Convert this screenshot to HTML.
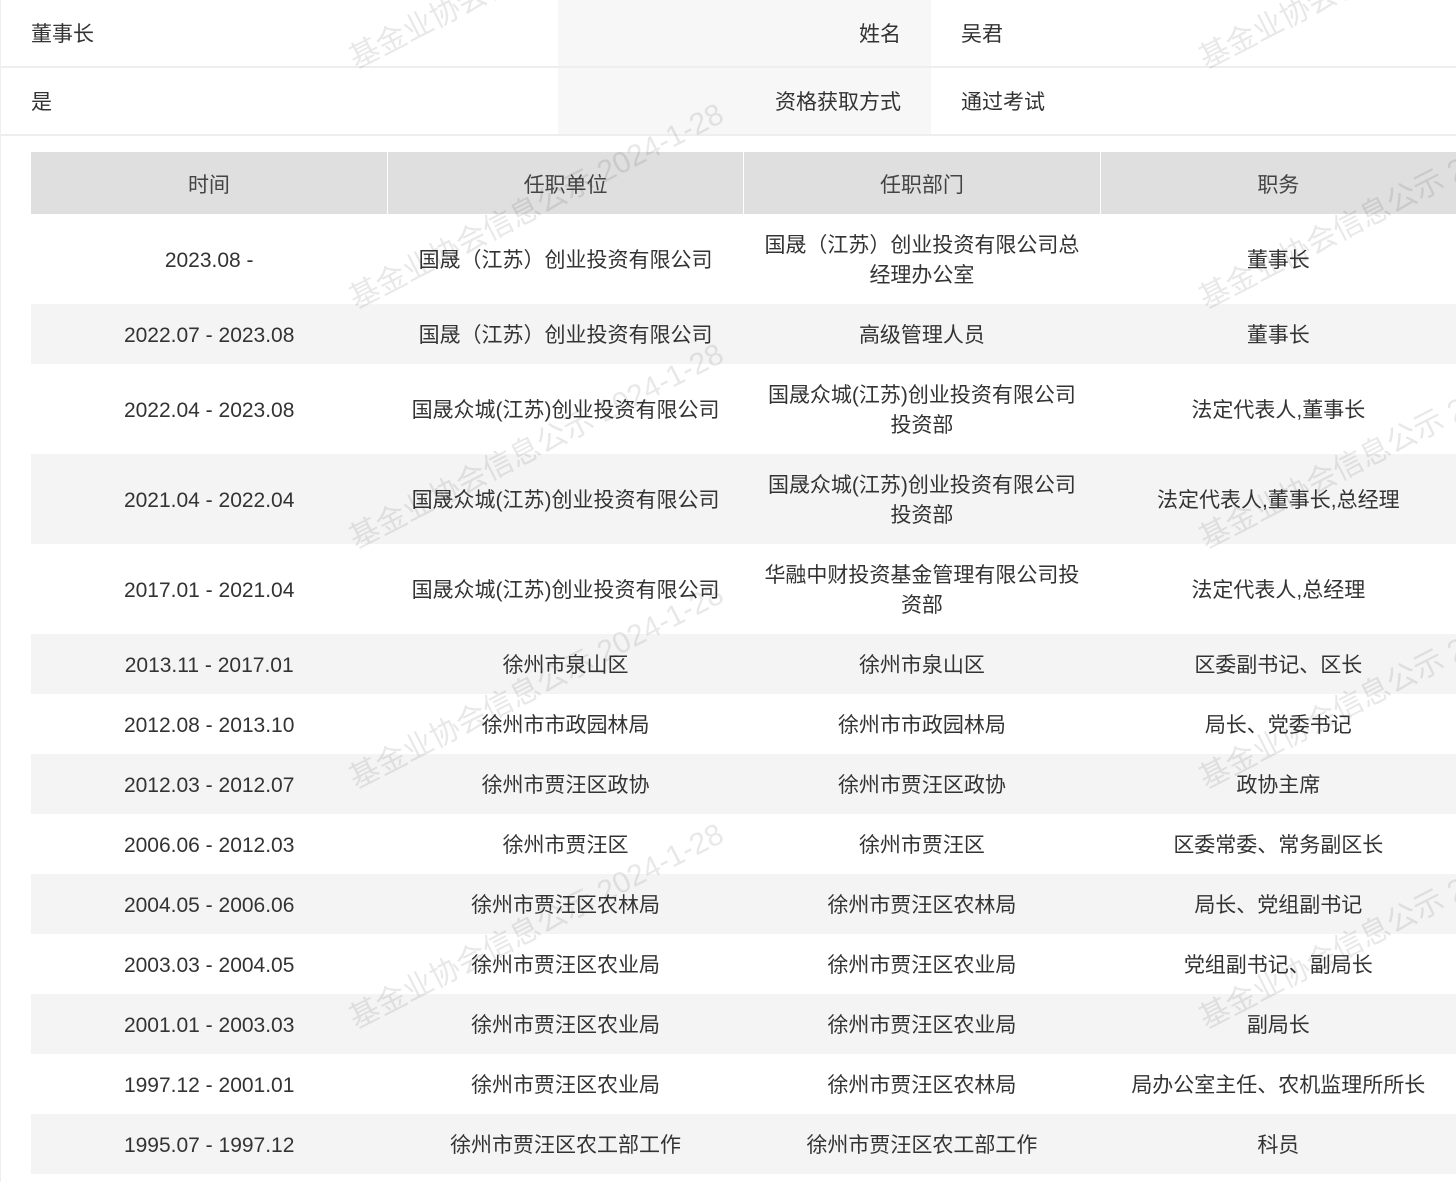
<!DOCTYPE html>
<html><head><meta charset="utf-8"><style>
*{margin:0;padding:0;box-sizing:border-box}
html,body{width:1456px;height:1182px;overflow:hidden;background:#fff;font-family:"Liberation Sans","Noto Sans CJK SC",sans-serif;color:#333;font-size:21px;position:relative}
.top{position:absolute;left:0;top:0;width:1456px;border-left:1px solid #eee}
.tr{display:flex;height:68px;border-bottom:2px solid #eee}
.c{display:flex;align-items:center}
.c1{width:557px;padding-left:30px}
.c2{width:373px;background:#f7f7f7;justify-content:flex-end;padding-right:30px}
.c3{flex:1;padding-left:30px}
.side{position:absolute;left:0;top:136px;width:1px;height:1046px;background:#eee}
table{position:absolute;left:31px;top:152px;border-collapse:collapse;width:1426px;table-layout:fixed}
th{background:#dfdfdf;font-weight:normal;height:62px;border-right:1px solid #fff;color:#444;padding-top:2px}
td{text-align:center;height:60px;line-height:30px;padding:3px 18px 0}
tr.t td{height:90px}
tr.g td{background:#f4f4f4}
.wm{position:absolute;font-size:30px;color:rgba(0,0,0,0.09);white-space:nowrap;transform:rotate(-27deg);transform-origin:0 0;pointer-events:none}
</style></head><body>
<div class="top">
<div class="tr"><div class="c c1">董事长</div><div class="c c2">姓名</div><div class="c c3">吴君</div></div>
<div class="tr"><div class="c c1">是</div><div class="c c2">资格获取方式</div><div class="c c3">通过考试</div></div>
</div>
<div class="side"></div>
<table>
<tr><th>时间</th><th>任职单位</th><th>任职部门</th><th>职务</th></tr>
<tr class="t"><td>2023.08 -</td><td>国晟（江苏）创业投资有限公司</td><td>国晟（江苏）创业投资有限公司总经理办公室</td><td>董事长</td></tr>
<tr class="g"><td>2022.07 - 2023.08</td><td>国晟（江苏）创业投资有限公司</td><td>高级管理人员</td><td>董事长</td></tr>
<tr class="t"><td>2022.04 - 2023.08</td><td>国晟众城(江苏)创业投资有限公司</td><td>国晟众城(江苏)创业投资有限公司投资部</td><td>法定代表人,董事长</td></tr>
<tr class="t g"><td>2021.04 - 2022.04</td><td>国晟众城(江苏)创业投资有限公司</td><td>国晟众城(江苏)创业投资有限公司投资部</td><td>法定代表人,董事长,总经理</td></tr>
<tr class="t"><td>2017.01 - 2021.04</td><td>国晟众城(江苏)创业投资有限公司</td><td>华融中财投资基金管理有限公司投资部</td><td>法定代表人,总经理</td></tr>
<tr class="g"><td>2013.11 - 2017.01</td><td>徐州市泉山区</td><td>徐州市泉山区</td><td>区委副书记、区长</td></tr>
<tr><td>2012.08 - 2013.10</td><td>徐州市市政园林局</td><td>徐州市市政园林局</td><td>局长、党委书记</td></tr>
<tr class="g"><td>2012.03 - 2012.07</td><td>徐州市贾汪区政协</td><td>徐州市贾汪区政协</td><td>政协主席</td></tr>
<tr><td>2006.06 - 2012.03</td><td>徐州市贾汪区</td><td>徐州市贾汪区</td><td>区委常委、常务副区长</td></tr>
<tr class="g"><td>2004.05 - 2006.06</td><td>徐州市贾汪区农林局</td><td>徐州市贾汪区农林局</td><td>局长、党组副书记</td></tr>
<tr><td>2003.03 - 2004.05</td><td>徐州市贾汪区农业局</td><td>徐州市贾汪区农业局</td><td>党组副书记、副局长</td></tr>
<tr class="g"><td>2001.01 - 2003.03</td><td>徐州市贾汪区农业局</td><td>徐州市贾汪区农业局</td><td>副局长</td></tr>
<tr><td>1997.12 - 2001.01</td><td>徐州市贾汪区农业局</td><td>徐州市贾汪区农林局</td><td>局办公室主任、农机监理所所长</td></tr>
<tr class="g"><td>1995.07 - 1997.12</td><td>徐州市贾汪区农工部工作</td><td>徐州市贾汪区农工部工作</td><td>科员</td></tr>
</table>
<div class="wm" style="left:340px;top:38px">基金业协会信息公示 2024-1-28</div>
<div class="wm" style="left:1190px;top:38px">基金业协会信息公示 2024-1-28</div>
<div class="wm" style="left:340px;top:278px">基金业协会信息公示 2024-1-28</div>
<div class="wm" style="left:1190px;top:278px">基金业协会信息公示 2024-1-28</div>
<div class="wm" style="left:340px;top:518px">基金业协会信息公示 2024-1-28</div>
<div class="wm" style="left:1190px;top:518px">基金业协会信息公示 2024-1-28</div>
<div class="wm" style="left:340px;top:758px">基金业协会信息公示 2024-1-28</div>
<div class="wm" style="left:1190px;top:758px">基金业协会信息公示 2024-1-28</div>
<div class="wm" style="left:340px;top:998px">基金业协会信息公示 2024-1-28</div>
<div class="wm" style="left:1190px;top:998px">基金业协会信息公示 2024-1-28</div>
</body></html>
